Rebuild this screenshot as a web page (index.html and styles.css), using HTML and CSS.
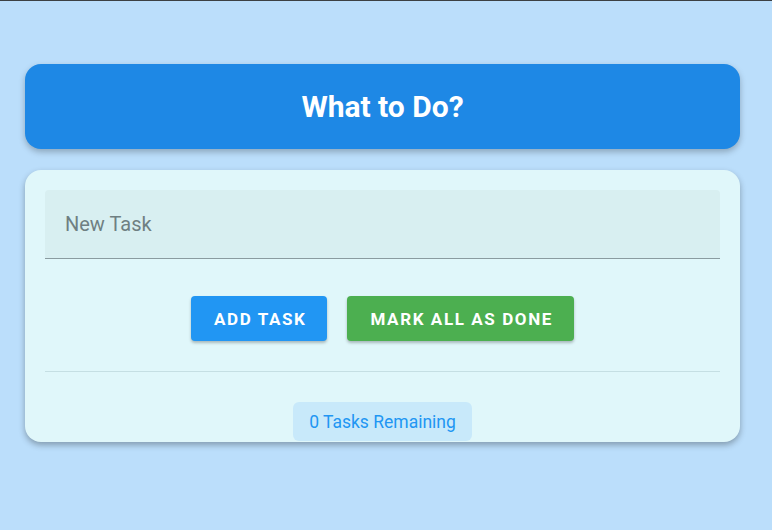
FILE: index.html
```html
<!DOCTYPE html>
<html>
<head>
<meta charset="utf-8">
<link rel="stylesheet" href="styles.css">
</head>
<body>
<div class="page">
  <header class="title-card">
    <h1 class="title">What to Do?</h1>
  </header>
  <main class="card">
    <div class="field">
      <input class="field-input" type="text" placeholder="New Task">
    </div>
    <div class="actions">
      <button class="btn btn-blue">ADD TASK</button>
      <button class="btn btn-green">MARK ALL AS DONE</button>
    </div>
    <hr class="divider">
    <div class="footer">
      <span class="chip">0 Tasks Remaining</span>
    </div>
  </main>
</div>
</body>
</html>
```
FILE: styles.css
```css
html, body {
  margin: 0;
  padding: 0;
  height: 100%;
}
body {
  background: #bbdefb;
  font-family: Roboto, "Liberation Sans", sans-serif;
  border-top: 1px solid #3c4043;
  box-sizing: border-box;
}
.page {
  padding: 63px 32px 0 25px;
  display: flex;
  flex-direction: column;
  gap: 21px;
}
.title-card {
  background: #1e88e5;
  border-radius: 16px;
  height: 85px;
  display: flex;
  align-items: center;
  justify-content: center;
  box-shadow: 0 3px 6px rgba(0, 0, 0, 0.25);
}
.title {
  margin: 0;
  color: #fff;
  font-size: 30px;
  font-weight: 700;
}
.card {
  background: #e0f7fa;
  border-radius: 16px;
  padding: 20px 20px 1px;
  box-shadow: 0 3px 6px rgba(0, 0, 0, 0.3);
  display: flex;
  flex-direction: column;
}
.field {
  background: #d8eff1;
  border-radius: 4px 4px 0 0;
  border-bottom: 1px solid #8a9ba0;
  height: 69px;
  box-sizing: border-box;
  display: flex;
  align-items: center;
}
.field-input {
  border: none;
  background: transparent;
  outline: none;
  font-family: Roboto, "Liberation Sans", sans-serif;
  font-size: 20px;
  padding: 0 20px;
  width: 100%;
  color: #333;
}
.field-input::placeholder {
  color: #6f7f82;
}
.actions {
  display: flex;
  justify-content: center;
  gap: 20px;
  margin-top: 37px;
}
.btn {
  height: 45px;
  border: none;
  border-radius: 4px;
  color: #fff;
  font-family: Roboto, "Liberation Sans", sans-serif;
  font-size: 17px;
  font-weight: 700;
  letter-spacing: 1.6px;
  padding: 0 21px 0 23px;
  box-shadow: 0 2px 3px rgba(0, 0, 0, 0.25);
}
.btn-blue { background: #2196f3; }
.btn-green { background: #4caf50; }
.divider {
  border: none;
  border-top: 1px solid #c5dfe3;
  margin: 30px 0 0;
}
.footer {
  display: flex;
  justify-content: center;
  margin-top: 30px;
}
.chip {
  background: #c8e9fa;
  color: #2196f3;
  font-size: 17.5px;
  border-radius: 6px;
  height: 39px;
  padding: 0 16px;
  display: flex;
  align-items: center;
}
```
